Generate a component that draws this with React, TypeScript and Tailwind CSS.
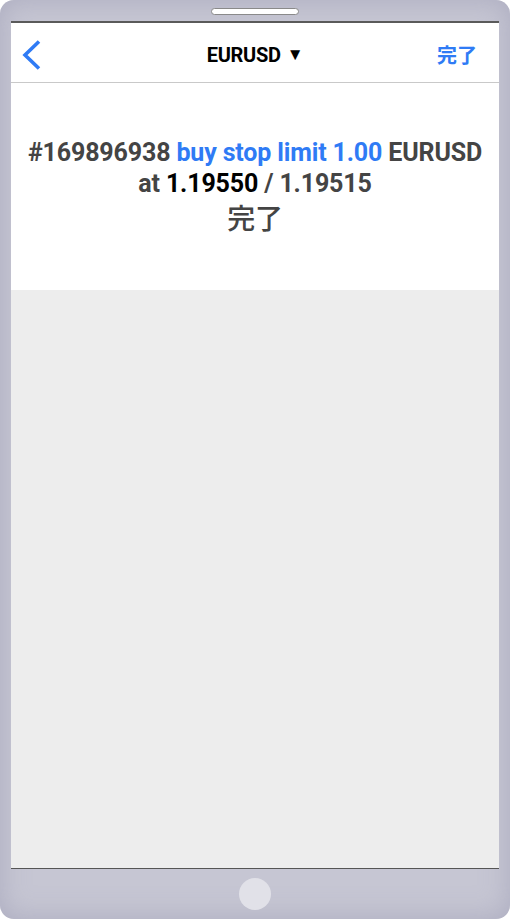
const font = { fontFamily: '"Roboto", "Liberation Sans", "Noto Sans CJK JP", sans-serif' }
const cjk = { fontFamily: '"Noto Sans CJK JP", sans-serif' }

export default function App() {
  return (
    <div className="min-h-screen bg-white">
      <div className="relative flex h-[919px] w-[510px] flex-col rounded-[14px] bg-[#c6c6d3] shadow-[inset_0_0_28px_rgba(150,150,175,0.55)]">
        {/* top bezel */}
        <div className="flex h-[21px] justify-center pt-[8px]">
          <div className="h-[7px] w-[88px] rounded-full border border-[#8a8a8a] bg-white" />
        </div>

        {/* screen */}
        <div className="mx-[11px] flex flex-1 flex-col border-t-2 border-b border-t-[#5a5a5a] border-b-[#555] bg-[#ededed]" style={font}>
          <div className="relative flex h-[60px] items-center justify-center border-b border-[#c9c9c9] bg-white">
            <svg className="absolute left-[10px] top-[16px]" width="22" height="32" viewBox="0 0 22 32" fill="none">
              <polyline points="18,2.5 4,16 18,29.5" stroke="#2f7bf5" strokeWidth="3.6" strokeLinecap="butt" strokeLinejoin="miter" />
            </svg>
            <div className="flex items-center gap-[6px] pt-[4px] text-[20px] font-bold tracking-[-0.3px] text-black">
              EURUSD <span className="text-[17px] leading-none">▼</span>
            </div>
            <span className="absolute right-[22px] top-[17px] text-[20px] font-bold text-[#2f7bf5]" style={cjk}>
              完了
            </span>
          </div>

          <div className="flex h-[207px] flex-col items-center bg-white pt-[54px] text-center text-[25px] font-bold leading-[31px] tracking-[-0.15px] text-[#444]">
            <div>
              #169896938 <span className="text-[#2f7bf5]">buy stop limit 1.00</span> EURUSD
            </div>
            <div>
              at <span className="text-black">1.19550</span> / 1.19515
            </div>
            <div className="mt-[2px] text-[28px] font-medium leading-[33px]" style={cjk}>完了</div>
          </div>

          <div className="flex-1" />
        </div>

        {/* bottom bezel */}
        <div className="flex h-[50px] items-center justify-center">
          <div className="h-[32px] w-[32px] rounded-full bg-[#e1e1e8]" />
        </div>
      </div>
    </div>
  )
}
